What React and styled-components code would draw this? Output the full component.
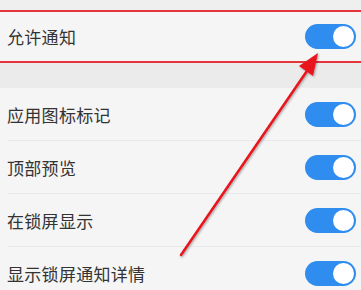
import React from 'react';
import styled, { createGlobalStyle } from 'styled-components';

const GlobalStyle = createGlobalStyle`
  * {
    box-sizing: border-box;
  }
  body {
    margin: 0;
    background: #f5f5f5;
    font-family: "Noto Sans CJK SC", "Noto Sans", sans-serif;
  }
`;

const Page = styled.div`
  position: relative;
  width: 361px;
  height: 290px;
  overflow: hidden;
  background: #f5f5f5;
`;

const TopStrip = styled.div`
  height: 10px;
  background: #efefef;
`;

const Row = styled.div`
  display: flex;
  align-items: center;
  justify-content: space-between;
  height: ${(p) => p.h}px;
  padding: 0 5px 0 7px;
  background: #f5f5f5;
  border-top: ${(p) => (p.highlight ? '2px solid #e6343c' : 'none')};
  border-bottom: ${(p) => (p.highlight ? '2px solid #e6343c' : 'none')};
`;

const Label = styled.span`
  font-size: 17px;
  color: #333;
  letter-spacing: 0.3px;
`;

const Band = styled.div`
  height: 25px;
  background: #ebebeb;
`;

const Divider = styled.div`
  height: 1px;
  margin-left: 8px;
  background: #e9e9e9;
`;

const Track = styled.div`
  position: relative;
  width: 51px;
  height: 25px;
  border-radius: 13px;
  background: #2e8def;
  flex-shrink: 0;
`;

const Knob = styled.div`
  position: absolute;
  top: 2px;
  right: 2px;
  width: 21px;
  height: 21px;
  border-radius: 50%;
  background: #fff;
`;

const Arrow = styled.svg`
  position: absolute;
  left: 0;
  top: 0;
  pointer-events: none;
`;

const Toggle = () => (
  <Track>
    <Knob />
  </Track>
);

const items = ['应用图标标记', '顶部预览', '在锁屏显示', '显示锁屏通知详情'];

export default function App() {
  return (
    <Page>
      <GlobalStyle />
      <TopStrip />
      <Row h={53} highlight>
        <Label>允许通知</Label>
        <Toggle />
      </Row>
      <Band />
      {items.map((t, i) => (
        <React.Fragment key={t}>
          {i > 0 && <Divider />}
          <Row h={52}>
            <Label>{t}</Label>
            <Toggle />
          </Row>
        </React.Fragment>
      ))}
      <Arrow width="361" height="290" viewBox="0 0 361 290">
        <defs>
          <filter id="sh" x="-20%" y="-20%" width="140%" height="140%">
            <feDropShadow dx="1" dy="1" stdDeviation="1" floodColor="#000" floodOpacity="0.35" />
          </filter>
        </defs>
        <g filter="url(#sh)">
          <line x1="181" y1="255" x2="309" y2="68" stroke="#e8141c" strokeWidth="2.5" strokeLinecap="round" />
          <polygon points="318,53 313,76 299,66" fill="#e8141c" />
        </g>
      </Arrow>
    </Page>
  );
}
